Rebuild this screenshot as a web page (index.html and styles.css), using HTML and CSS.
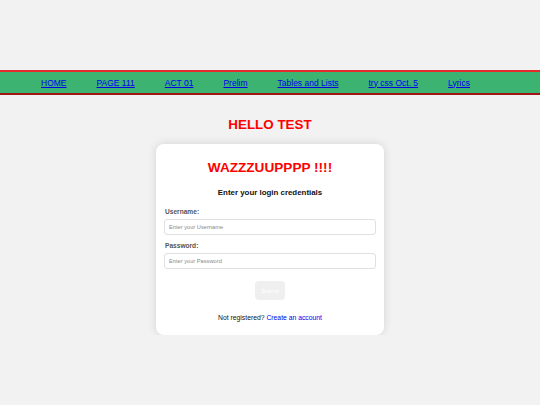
FILE: index.html
```html
<!DOCTYPE html>
<html>
<head>
<meta charset="utf-8">
<link rel="stylesheet" href="styles.css">
</head>
<body>
<div class="page">
  <nav class="topnav">
    <a href="#">HOME</a>
    <a href="#">PAGE 111</a>
    <a href="#">ACT 01</a>
    <a href="#">Prelim</a>
    <a href="#">Tables and Lists</a>
    <a href="#">try css Oct. 5</a>
    <a href="#">Lyrics</a>
  </nav>
  <h1 class="hello">HELLO TEST</h1>
  <div class="card">
    <h2 class="wazz">WAZZZUUPPPP !!!!</h2>
    <h3 class="sub">Enter your login credentials</h3>
    <form class="form">
      <label class="lbl" for="u">Username:</label>
      <input class="field" id="u" type="text" placeholder="Enter your Username">
      <label class="lbl lbl-pw" for="p">Password:</label>
      <input class="field" id="p" type="password" placeholder="Enter your Password">
      <div class="btnrow"><button class="btn" type="button">Submit</button></div>
    </form>
    <p class="reg">Not registered? <a href="#">Create an account</a></p>
  </div>
</div>
</body>
</html>
```
FILE: styles.css
```css
* { box-sizing: border-box; }
html, body { margin: 0; padding: 0; }
body {
  background: #f2f2f2;
  font-family: "Liberation Sans", Arial, sans-serif;
}
.page { padding-top: 70px; }
.topnav {
  display: flex;
  align-items: center;
  gap: 30px;
  height: 25px;
  padding-left: 41px;
  background: #3cb371;
  border-top: 2px solid #e42a2a;
  border-bottom: 2px solid #a01414;
  font-size: 8.5px;
}
.topnav a { color: #0000ee; text-decoration: underline; }
.hello {
  margin: 22px 0 11px;
  text-align: center;
  color: #ff0000;
  font-size: 13.4px;
  line-height: 16px;
  font-weight: bold;
}
.card {
  width: 228px;
  margin: 0 auto;
  background: #fff;
  border-radius: 8px;
  box-shadow: 0 0 10px rgba(0,0,0,0.13);
  padding: 16px 8px 13px;
}
.wazz {
  margin: 0;
  text-align: center;
  color: #ff0000;
  font-size: 13.6px;
  line-height: 16px;
  font-weight: bold;
}
.sub {
  margin: 12px 0 0;
  text-align: center;
  color: #111;
  font-size: 7.9px;
  line-height: 10px;
  font-weight: bold;
}
.form { display: flex; flex-direction: column; margin-top: 10px; }
.lbl {
  color: #555;
  font-size: 6.6px;
  line-height: 8px;
  font-weight: bold;
  margin-left: 1px;
}
.lbl-pw { margin-top: 7px; }
.field {
  margin-top: 3px;
  height: 16px;
  width: 100%;
  border: 1px solid #e0e0e0;
  border-radius: 3px;
  padding: 0 4px;
  font-family: "Liberation Sans", Arial, sans-serif;
  font-size: 5.7px;
  background: #fff;
  outline: none;
}
.field::placeholder { color: #8a8a8a; }
.btnrow { display: flex; justify-content: center; margin-top: 12px; }
.btn {
  width: 30px;
  height: 19px;
  border: none;
  border-radius: 4px;
  background: #efefef;
  color: #fff;
  font-family: "Liberation Sans", Arial, sans-serif;
  font-size: 5.7px;
  padding: 0;
}
.reg {
  margin: 13px 0 0;
  text-align: center;
  font-size: 6.8px;
  line-height: 9px;
  color: #111;
}
.reg a { color: #0000ee; text-decoration: none; }
```
